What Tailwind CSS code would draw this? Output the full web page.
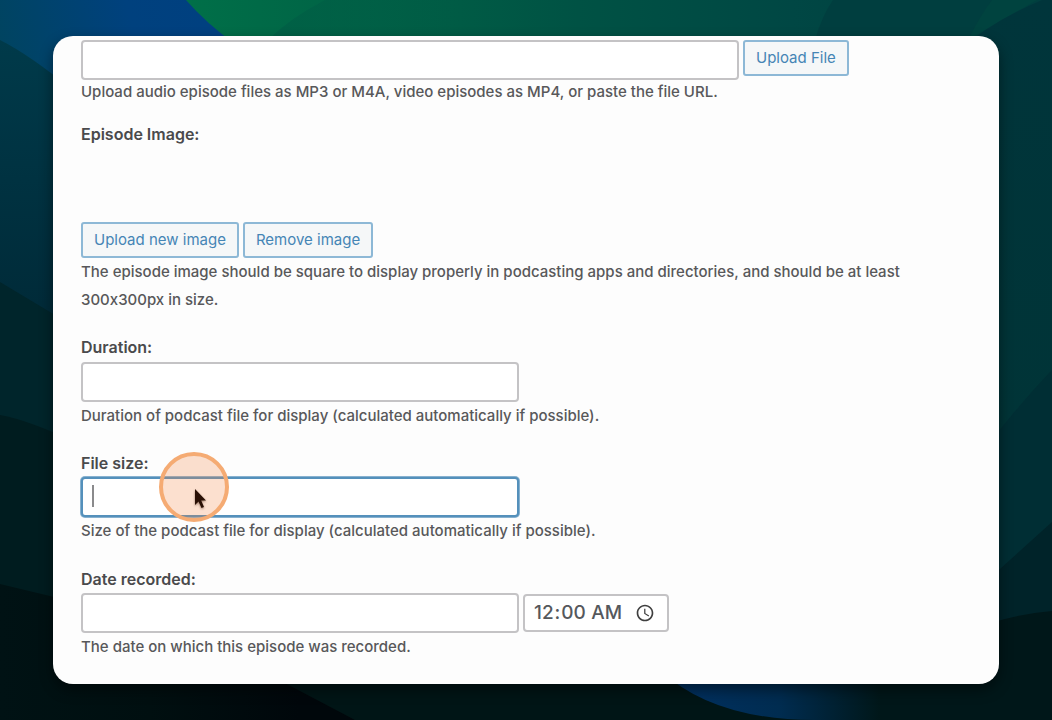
<!DOCTYPE html>
<html lang="en-US">
<head>
<meta charset="utf-8">
<title>Episode details</title>
<script src="https://cdn.jsdelivr.net/npm/@tailwindcss/browser@4"></script>
</head>
<body class="relative isolate flex min-h-screen bg-[#001417] px-[53px] py-9 font-['Inter','Liberation_Sans',sans-serif] text-[15px] font-medium text-[#58585a] [font-feature-settings:'calt'_0]">
<!-- Wallpaper -->
<svg class="absolute inset-0 -z-10 h-full w-full" viewBox="0 0 1052 720" preserveAspectRatio="none" aria-hidden="true">
  <defs>
    <linearGradient id="green" x1="190" y1="0" x2="1052" y2="0" gradientUnits="userSpaceOnUse"><stop offset="0" stop-color="#006f48"/><stop offset=".16" stop-color="#006546"/><stop offset=".45" stop-color="#005244"/><stop offset=".7" stop-color="#004744"/><stop offset="1" stop-color="#003c3c"/></linearGradient>
    <linearGradient id="fold" x1="270" y1="0" x2="480" y2="0" gradientUnits="userSpaceOnUse"><stop offset="0" stop-color="#005a45" stop-opacity=".6"/><stop offset="1" stop-color="#005a45" stop-opacity="0"/></linearGradient>
    <linearGradient id="blue" x1="0" y1="50" x2="200" y2="0" gradientUnits="userSpaceOnUse"><stop offset="0" stop-color="#004460"/><stop offset=".65" stop-color="#00417e"/><stop offset="1" stop-color="#004080"/></linearGradient>
    <linearGradient id="left" x1="0" y1="40" x2="0" y2="320" gradientUnits="userSpaceOnUse"><stop offset="0" stop-color="#003a4a"/><stop offset="1" stop-color="#002a38"/></linearGradient>
    <linearGradient id="right" x1="0" y1="0" x2="0" y2="430" gradientUnits="userSpaceOnUse"><stop offset="0" stop-color="#00353b"/><stop offset="1" stop-color="#003437"/></linearGradient>
    <linearGradient id="lowerleft" x1="0" y1="0" x2="300" y2="0" gradientUnits="userSpaceOnUse"><stop offset="0" stop-color="#001214"/><stop offset=".5" stop-color="#000f10"/><stop offset="1" stop-color="#00070b"/></linearGradient>
    <linearGradient id="wave" x1="680" y1="0" x2="880" y2="0" gradientUnits="userSpaceOnUse"><stop offset="0" stop-color="#003060"/><stop offset=".5" stop-color="#002c50"/><stop offset="1" stop-color="#001719"/></linearGradient>
  </defs>
  <path fill="url(#green)" d="M180 0H1052V110H180z"/>
  <path fill="url(#fold)" d="M325 0Q290 18 268 40H480V0z"/>
  <path fill="#003e3f" d="M833 0Q822 16 815 40H1052V0z"/>
  <path fill="#00433f" d="M992 0Q980 16 968 40L1037 0z"/>
  <path fill="url(#right)" d="M1042 0Q990 22 960 50V440H1052V0z"/>
  <path fill="url(#blue)" d="M0 0H186Q206 23 235 44L100 110H0z"/>
  <path fill="url(#left)" d="M0 40Q30 55 75 92V330H0z"/>
  <path fill="#00252b" d="M0 282L75 327V450H0z"/>
  <path fill="#001c1f" d="M0 415Q28 420 75 442V600H0z"/>
  <path fill="#002e34" d="M1052 370Q1025 398 990 442V570H1052z"/>
  <path fill="#002329" d="M1052 522L990 578V640H1052z"/>
  <path fill="#001719" d="M1052 611Q1005 615 960 634L860 670V720H1052z"/>
  <path fill="url(#lowerleft)" d="M0 584L75 602V670H280L355 720H0z"/>
  <path fill="#001516" d="M260 670L355 720H820L680 670z"/>
  <path fill="url(#wave)" d="M660 670Q713 720 815 720H900V670z"/>
</svg>

<main class="relative w-full overflow-hidden rounded-[20px] bg-[#fdfdfd] px-7 pt-1 shadow-[0_6px_14px_rgba(0,0,0,0.45)]">
  <form>
    <section>
      <div class="flex items-start gap-1">
        <input type="text" aria-label="Episode file" class="h-10 w-[658px] rounded-[4px] border-2 border-[#c4c3c5] bg-white px-2.5 outline-none">
        <button type="button" class="h-9 rounded-[3px] border-2 border-[#8db8d6] bg-[#f5f7f8] px-[11px] font-normal text-[#4585b5]">Upload File</button>
      </div>
      <p class="leading-6">Upload audio episode files as MP3 or M4A, video episodes as MP4, or paste the file URL.</p>
    </section>

    <section class="mt-[18px]">
      <h2 class="text-base leading-6 font-semibold text-[#4a4a4c]">Episode Image:</h2>
      <div class="mt-[76px] flex gap-1">
        <button type="button" class="h-9 rounded-[3px] border-2 border-[#8db8d6] bg-[#f5f7f8] px-[11px] font-normal text-[#4585b5]">Upload new image</button>
        <button type="button" class="h-9 rounded-[3px] border-2 border-[#8db8d6] bg-[#f5f7f8] px-[11px] font-normal text-[#4585b5]">Remove image</button>
      </div>
      <p class="max-w-[840px] leading-7">The episode image should be square to display properly in podcasting apps and directories, and should be at least 300x300px in size.</p>
    </section>

    <section class="mt-[21px]">
      <label for="duration" class="block text-base leading-6 font-semibold text-[#4a4a4c]">Duration:</label>
      <input id="duration" type="text" class="mt-[3px] block h-10 w-[438px] rounded-[4px] border-2 border-[#c4c3c5] bg-white px-2.5 outline-none">
      <p class="leading-7">Duration of podcast file for display (calculated automatically if possible).</p>
    </section>

    <section class="mt-[21px]">
      <label for="filesize" class="block text-base leading-6 font-semibold text-[#4a4a4c]">File size:</label>
      <div class="relative mt-[2px] w-[438px]">
        <input id="filesize" type="text" class="block h-10 w-full rounded-[4px] border-2 border-[#5490bb] bg-white px-2.5 ring-1 ring-[#5490bb]/70 outline-none">
        <span class="absolute top-2 left-[11px] h-[22px] w-[2px] bg-[#8a8a8c]"></span>
        <div class="absolute -top-[25px] left-[78px] size-[70px] rounded-full border-4 border-[#f5ab73] bg-[#f3853e40]"></div>
        <svg class="absolute top-[10px] left-[112px] h-[23px] w-4 drop-shadow-[0_1px_1px_rgba(60,20,0,0.5)]" viewBox="0 0 16 23" aria-hidden="true"><path fill="#2a1005" d="M2 2V18L5.500 14.500L8.500 21L11 20L8.200 13.500H13z"/></svg>
      </div>
      <p class="leading-7">Size of the podcast file for display (calculated automatically if possible).</p>
    </section>

    <section class="mt-[22px]">
      <label for="recorded" class="block text-base leading-6 font-semibold text-[#4a4a4c]">Date recorded:</label>
      <div class="mt-[2px] flex items-center gap-1">
        <input id="recorded" type="text" class="h-10 w-[438px] rounded-[4px] border-2 border-[#c4c3c5] bg-white px-2.5 outline-none">
        <input type="time" value="00:00" aria-label="Time recorded" class="h-[38px] w-[146px] rounded-[4px] border-2 border-[#c4c3c5] bg-white pr-3 pl-2 text-[19px] text-[#55585c] outline-none [&::-webkit-calendar-picker-indicator]:size-5 [&::-webkit-calendar-picker-indicator]:p-0 [&::-webkit-calendar-picker-indicator]:opacity-75">
      </div>
      <p class="leading-7">The date on which this episode was recorded.</p>
    </section>
  </form>
</main>
</body>
</html>
